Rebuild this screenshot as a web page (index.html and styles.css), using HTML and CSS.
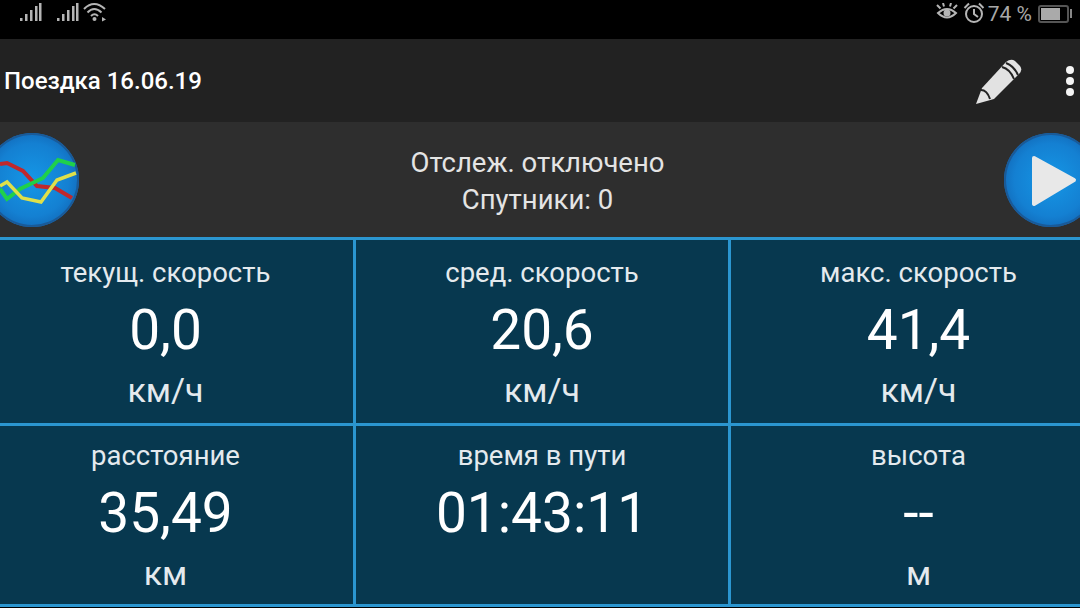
FILE: index.html
```html
<!DOCTYPE html>
<html lang="ru">
<head>
  <meta charset="UTF-8" />
  <meta name="viewport" content="width=device-width, initial-scale=1.0" />
  <title>Поездка 16.06.19</title>
  <link rel="stylesheet" href="styles.css">
</head>
<body>
<div class="screen">
  <div class="status-bar">
    <div class="status-left">
      <svg class="signal" width="22" height="20" viewBox="0 0 22 20">
        <rect x="0" y="16" width="2.5" height="3" />
        <rect x="5" y="12" width="2.5" height="7" />
        <rect x="10" y="8" width="2.5" height="11" />
        <rect x="15" y="4" width="2.5" height="15" />
        <rect x="19" y="1" width="2.5" height="18" />
      </svg>
      <svg class="signal" width="22" height="20" viewBox="0 0 22 20">
        <rect x="0" y="16" width="2.5" height="3" />
        <rect x="5" y="12" width="2.5" height="7" />
        <rect x="10" y="8" width="2.5" height="11" />
        <rect x="15" y="4" width="2.5" height="15" />
        <rect x="19" y="1" width="2.5" height="18" />
      </svg>
      <svg class="wifi" width="26" height="20" viewBox="0 0 26 20">
        <path d="M1 7 Q11 -3 22 7" />
        <path d="M4.500 10.500 Q11 3.500 18.500 10.500" />
        <path d="M8 14 Q11.500 10.500 15 14" />
        <circle cx="11.500" cy="17" r="2" class="dot" />
        <path d="M19 15 L23 17.500 L19 19.500 Z" class="dot" />
      </svg>
    </div>
    <div class="status-right">
      <svg class="eye" width="22" height="20" viewBox="0 0 22 20">
        <path d="M2 10 Q11 2 20 10 Q11 19 2 10 Z" />
        <circle cx="11" cy="10" r="3.500" class="dot" />
        <path d="M1 2 L4.500 5.500 M7 0 L8 3.500 M15 0 L14 3.500 M21 2 L17.500 5.500" />
      </svg>
      <svg class="alarm" width="22" height="22" viewBox="0 0 22 22">
        <circle cx="11" cy="12" r="8" />
        <path d="M11 7 V12 L15 15" />
        <path d="M1.500 6 L6 1.500 M16 1.500 L20.500 6" />
      </svg>
      <span class="battery-text">74 %</span>
      <div class="battery"><div class="battery-fill" style="width: 74%"></div></div>
      <div class="battery-tip"></div>
    </div>
  </div>

  <div class="toolbar">
    <div class="trip-title">Поездка 16.06.19</div>
    <div class="toolbar-actions">
      <svg class="pencil" width="46" height="46" viewBox="0 0 46 46">
        <path d="M0 46 L6 30 L30 4 Q35 0 39 3 L44 8 Q47 12 43 16 L18 41 Z" fill="#e2e2e2" />
        <path d="M5 32 Q11 32 14 41" class="pencil-line" />
        <path d="M26 9 Q34 11 38 21" class="pencil-line" />
        <path d="M30 5 Q38 8 42 17" class="pencil-line" />
      </svg>
      <div class="menu-dots">
        <span></span>
        <span></span>
        <span></span>
      </div>
    </div>
  </div>

  <div class="control-panel">
    <div class="round-btn left-btn">
      <svg width="94" height="94" viewBox="0 0 94 94">
        <polyline points="15,31 22,30 38,38 52,53 70,55 87,65" fill="none" stroke="#c0282c" stroke-width="4" />
        <polyline points="15,56 22,66 35,56 58,45 73,27 90,32" fill="none" stroke="#1fd04a" stroke-width="4" />
        <polyline points="15,53 22,49 37,65 56,69 72,47 91,40" fill="none" stroke="#dfe04a" stroke-width="3.500" />
      </svg>
    </div>
    <div class="track-status">
      <div>Отслеж. отключено</div>
      <div>Спутники: 0</div>
    </div>
    <div class="round-btn right-btn">
      <svg width="94" height="94" viewBox="0 0 94 94">
        <path d="M30 25 L70 47 L30 71 Z" fill="#e8e8e8" stroke="#e8e8e8" stroke-width="4" stroke-linejoin="round" />
      </svg>
    </div>
  </div>

  <div class="stats">
    <div class="stat">
      <div class="stat-label">текущ. скорость</div>
      <div class="stat-value">0,0</div>
      <div class="stat-unit">км/ч</div>
    </div>
    <div class="stat">
      <div class="stat-label">сред. скорость</div>
      <div class="stat-value">20,6</div>
      <div class="stat-unit">км/ч</div>
    </div>
    <div class="stat">
      <div class="stat-label">макс. скорость</div>
      <div class="stat-value">41,4</div>
      <div class="stat-unit">км/ч</div>
    </div>
    <div class="stat">
      <div class="stat-label">расстояние</div>
      <div class="stat-value">35,49</div>
      <div class="stat-unit">км</div>
    </div>
    <div class="stat">
      <div class="stat-label">время в пути</div>
      <div class="stat-value">01:43:11</div>
      <div class="stat-unit"></div>
    </div>
    <div class="stat">
      <div class="stat-label">высота</div>
      <div class="stat-value">--</div>
      <div class="stat-unit">м</div>
    </div>
  </div>
</div>
</body>
</html>
```

FILE: styles.css
```css
html, body {
    margin: 0;
    padding: 0;
    background: #000;
}

.screen {
    width: 1080px;
    height: 608px;
    overflow: hidden;
    font-family: Roboto, "Liberation Sans", sans-serif;
    color: #eee;
}

.status-bar {
    height: 39px;
    background: #000;
    display: flex;
    justify-content: space-between;
    padding: 0 8px 0 20px;
    box-sizing: border-box;
}

.status-left,
.status-right {
    display: flex;
    align-items: flex-start;
    padding-top: 2px;
}

.signal {
    margin-right: 15px;
    fill: #b5b5b5;
}

.wifi {
    margin-left: -11px;
}

.status-bar svg path,
.status-bar svg circle {
    fill: none;
    stroke: #b5b5b5;
    stroke-width: 2;
}

.status-bar svg .dot {
    fill: #b5b5b5;
    stroke: none;
}

.status-right .alarm {
    margin-right: 4px;
}

.status-right .eye {
    margin: 1px 5px 0 3px;
}

.battery-text {
    font-size: 21px;
    line-height: 24px;
    color: #a8a8a8;
    margin: 0 6px 0 -1px;
}

.battery {
    width: 25px;
    height: 12px;
    margin-top: 3px;
    border: 2px solid #555;
    border-radius: 3px;
    padding: 1px;
}

.battery-fill {
    height: 100%;
    background: #aaa;
}

.battery-tip {
    width: 2px;
    height: 9px;
    margin: 7px 0 0 1px;
    background: #888;
}

.toolbar {
    height: 83px;
    background: #222;
    display: flex;
    justify-content: space-between;
    align-items: center;
    padding-left: 4px;
}

.trip-title {
    font-size: 24px;
    font-weight: 500;
    color: #fff;
}

.toolbar-actions {
    display: flex;
    align-items: center;
}

.pencil-line {
    fill: none;
    stroke: #222;
    stroke-width: 2;
}

.menu-dots {
    display: flex;
    flex-direction: column;
    gap: 3px;
    margin: 0 6px 0 44px;
}

.menu-dots span {
    display: block;
    width: 8px;
    height: 8px;
    border-radius: 50%;
    background: #f5f5f5;
}

.control-panel {
    height: 115px;
    background: #2e2e2e;
    display: flex;
    align-items: center;
    justify-content: space-between;
}

.round-btn {
    flex: none;
    width: 94px;
    height: 94px;
    border-radius: 50%;
    background: radial-gradient(circle, #1597e6 0%, #1480d2 55%, #0f529e 100%);
    box-shadow: inset 0 0 0 2px #1a5a98;
    overflow: hidden;
}

.left-btn {
    margin-left: -15px;
}

.right-btn {
    margin-right: -18px;
}

.track-status {
    text-align: center;
    font-size: 27.5px;
    line-height: 37px;
    color: #e4e4e4;
    padding-top: 2px;
    margin-right: 8px;
}

.stats {
    display: grid;
    grid-template-columns: 375px 372px 375px;
    grid-template-rows: 183px 178px;
    gap: 3px;
    width: 1128px;
    margin-left: -22px;
    padding: 3px 0;
    background: #2b96d0;
}

.stat {
    background: #07384f;
    display: flex;
    flex-direction: column;
    align-items: center;
    justify-content: center;
    text-align: center;
    padding-top: 2px;
    box-sizing: border-box;
}

.stat-label {
    font-size: 27.5px;
    line-height: 34px;
    color: #e4eaee;
}

.stat-value {
    font-size: 55px;
    line-height: 66px;
    margin-top: 7px;
    color: #fff;
}

.stat-unit {
    font-size: 34px;
    line-height: 40px;
    height: 40px;
    margin-top: 7px;
    color: #e4eaee;
}
```
